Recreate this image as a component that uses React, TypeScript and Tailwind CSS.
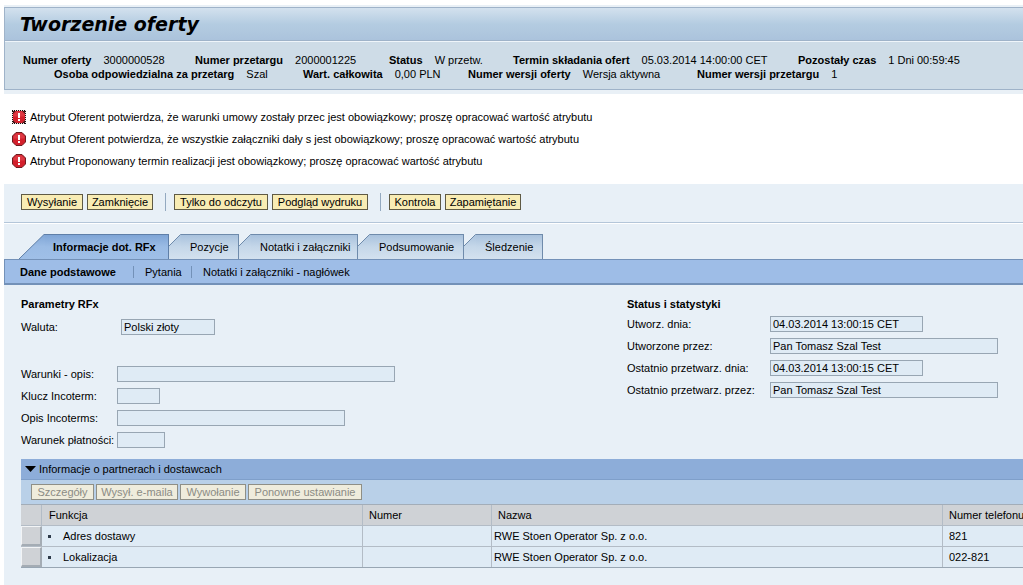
import React from "react";

type Fact = { label: string; value: string };

const factsTop: Fact[] = [
  { label: "Numer oferty", value: "3000000528" },
  { label: "Numer przetargu", value: "2000001225" },
  { label: "Status", value: "W przetw." },
  { label: "Termin składania ofert", value: "05.03.2014 14:00:00 CET" },
  { label: "Pozostały czas", value: "1 Dni 00:59:45" },
];

const factsBottom: Fact[] = [
  { label: "Osoba odpowiedzialna za przetarg", value: "Szal" },
  { label: "Wart. całkowita", value: "0,00 PLN" },
  { label: "Numer wersji oferty", value: "Wersja aktywna" },
  { label: "Numer wersji przetargu", value: "1" },
];

const messages = [
  "Atrybut Oferent potwierdza, że warunki umowy zostały przec jest obowiązkowy; proszę opracować wartość atrybutu",
  "Atrybut Oferent potwierdza, że wszystkie załączniki dały s jest obowiązkowy; proszę opracować wartość atrybutu",
  "Atrybut Proponowany termin realizacji jest obowiązkowy; proszę opracować wartość atrybutu",
];

const tabs = [
  { label: "Pozycje", width: "w-[70px]" },
  { label: "Notatki i załączniki", width: "w-[119px]" },
  { label: "Podsumowanie", width: "w-[106px]" },
  { label: "Śledzenie", width: "w-[79px]" },
];

const partners = [
  { role: "Adres dostawy", number: "", name: "RWE Stoen Operator Sp. z o.o.", phone: "821" },
  { role: "Lokalizacja", number: "", name: "RWE Stoen Operator Sp. z o.o.", phone: "022-821" },
];

function FactItem({ label, value }: Fact) {
  return (
    <div className="flex gap-3 whitespace-nowrap">
      <dt className="font-bold">{label}</dt>
      <dd>{value}</dd>
    </div>
  );
}

function ErrorIcon({ focused }: { focused: boolean }) {
  return (
    <svg className="h-[14px] w-[14px] shrink-0" viewBox="0 0 14 14" aria-hidden="true">
      <path d="M4 .5h6L13.5 4v6L10 13.5H4L.5 10V4z" fill="#d3202c" stroke="#6e1c20" />
      <path d="M4.5 1.5h5l3 3v2h-11v-2z" fill="#e8505a" opacity=".5" />
      <rect x="6" y="3" width="2" height="5" fill="#fff" />
      <rect x="6" y="9" width="2" height="2" fill="#fff" />
      {focused && (
        <>
          <rect x=".5" y=".5" width="13" height="13" fill="none" stroke="#f3dcdc" />
          <path
            d="M0 .5H14M13.5 1V14M0 13.5H14M.5 1V14"
            fill="none"
            stroke="#111"
            strokeDasharray="1 1"
          />
          <path d="M1 1h2v1H2v1H1zM13 1h-2v1h1v1h1zM1 13h2v-1H2v-1H1zM13 13h-2v-1h1v-1h1z" fill="#4a1416" />
        </>
      )}
    </svg>
  );
}

function ActionButton({ children, width }: { children: string; width: string }) {
  return (
    <button
      type="button"
      className={`${width} h-4 whitespace-nowrap border border-[#5f5a44] bg-[#f8ecb4] text-center leading-[14px]`}
    >
      {children}
    </button>
  );
}

function DisabledButton({ children, width }: { children: string; width: string }) {
  return (
    <button
      type="button"
      disabled
      className={`${width} h-4 whitespace-nowrap border border-[#8f8f86] bg-[#efecdc] text-center leading-[14px] text-[#8b8b84]`}
    >
      {children}
    </button>
  );
}

function Separator() {
  return <span className="h-[18px] w-px bg-[#93a9c0]" />;
}

type FieldProps = {
  id: string;
  label: string;
  labelWidth: string;
  width: string;
  value?: string;
};

function Field({ id, label, labelWidth, width, value = "" }: FieldProps) {
  return (
    <div className="flex h-[22px] items-center">
      <label htmlFor={id} className={`${labelWidth} shrink-0 whitespace-nowrap`}>
        {label}
      </label>
      <input
        id={id}
        readOnly
        value={value}
        className={`${width} h-4 border border-[#98a6b3] bg-[#dfebf5] px-[2px] leading-[14px] outline-none`}
      />
    </div>
  );
}

function Tab({ label, width }: { label: string; width: string }) {
  return (
    <button
      type="button"
      role="tab"
      aria-selected={false}
      className={`${width} flex h-[25px] whitespace-nowrap`}
    >
      <svg className="h-[25px] w-3 shrink-0" viewBox="0 0 12 25" aria-hidden="true">
        <defs>
          <linearGradient id="tabFill" gradientUnits="userSpaceOnUse" x1="0" y1="0" x2="0" y2="25">
            <stop offset="0" stopColor="#a9c2dd" />
            <stop offset=".5" stopColor="#c5d7e9" />
            <stop offset="1" stopColor="#d3e1ef" />
          </linearGradient>
        </defs>
        <path d="M0 12 12 0V25H0z" fill="url(#tabFill)" />
        <path d="M0 12 11.5.5H12" fill="none" stroke="#6f8bab" />
      </svg>
      <span className="h-[25px] grow border-r border-t border-[#6f8bab] bg-linear-to-b from-[#a9c2dd] via-[#c5d7e9] to-[#d3e1ef] pl-[9px] text-left leading-[25px]">
        {label}
      </span>
    </button>
  );
}

export default function App() {
  return (
    <div className="min-h-screen overflow-x-hidden bg-white pl-1 pt-[5px] font-['Liberation_Sans',Arial,sans-serif] text-[11px] leading-[14px] text-black">
      <header className="border-b-4 border-t-2 border-[#e9f0f6]">
        <div className="border-y border-l border-[#9fb3c9]">
          <h1 className="h-8 bg-linear-to-b from-[#d3e1ee] via-[#b4cce1] to-[#abc3dc] pl-[15px] font-['DejaVu_Sans',Verdana,sans-serif] text-[19px] font-bold italic leading-8">
            Tworzenie oferty
          </h1>
          <dl className="h-[49px] border-t border-[#9fb3c9] bg-[#cedce7] pl-[18px] pt-[12px] shadow-[inset_0_1px_0_#eff5fa]">
            <div className="grid grid-cols-[172px_194px_124px_285px_auto]">
              {factsTop.map((fact) => (
                <FactItem key={fact.label} {...fact} />
              ))}
            </div>
            <div className="grid grid-cols-[249px_165px_229px_auto] pl-[31px]">
              {factsBottom.map((fact) => (
                <FactItem key={fact.label} {...fact} />
              ))}
            </div>
          </dl>
        </div>
      </header>

      <ul className="py-3 pl-2">
        {messages.map((message, index) => (
          <li key={message} className="flex h-[22px] items-center gap-1">
            <ErrorIcon focused={index === 0} />
            <span>{message}</span>
          </li>
        ))}
      </ul>

      <main className="min-h-[401px] bg-[#e8f0f7]">
        <div className="flex h-10 items-center border-b border-white pb-[3px] pl-[17px] shadow-[inset_0_-1px_0_#b4c6d9]">
          <div className="flex gap-1">
            <ActionButton width="w-[62px]">Wysyłanie</ActionButton>
            <ActionButton width="w-[66px]">Zamknięcie</ActionButton>
          </div>
          <div className="flex items-center gap-2 pl-3">
            <Separator />
            <div className="flex gap-1">
              <ActionButton width="w-[94px]">Tylko do odczytu</ActionButton>
              <ActionButton width="w-[96px]">Podgląd wydruku</ActionButton>
            </div>
          </div>
          <div className="flex items-center gap-2 pl-3">
            <Separator />
            <div className="flex gap-1">
              <ActionButton width="w-[52px]">Kontrola</ActionButton>
              <ActionButton width="w-[76px]">Zapamiętanie</ActionButton>
            </div>
          </div>
        </div>

        <div role="tablist" className="flex pl-[15px] pt-[10px]">
          <button
            type="button"
            role="tab"
            aria-selected={true}
            className="flex h-[25px] w-[150px] whitespace-nowrap font-bold"
          >
            <svg className="h-[25px] w-[26px] shrink-0" viewBox="0 0 26 25" aria-hidden="true">
              <defs>
                <linearGradient id="activeTabFill" x1="0" y1="0" x2="0" y2="1">
                  <stop offset="0" stopColor="#7fa5d6" />
                  <stop offset=".5" stopColor="#9bbce5" />
                  <stop offset="1" stopColor="#9fbfe7" />
                </linearGradient>
              </defs>
              <path d="M0 25 25.5 0H26V25z" fill="url(#activeTabFill)" />
              <path d="M0 25 25 .5H26" fill="none" stroke="#5f7fa8" />
            </svg>
            <span className="h-[25px] grow border-r border-t border-[#5f7fa8] bg-linear-to-b from-[#7fa5d6] via-[#9bbce5] to-[#9fbfe7] pl-2 text-left leading-[25px]">
              Informacje dot. RFx
            </span>
          </button>
          {tabs.map((tab) => (
            <Tab key={tab.label} {...tab} />
          ))}
        </div>

        <nav className="flex h-[26px] items-center border-b-2 border-l border-t border-[#7391b8] bg-[#9ebde7] pl-[15px]">
          <a href="#dane" className="w-[113px] font-bold">
            Dane podstawowe
          </a>
          <span className="h-3 w-px bg-[#7391b8]" />
          <a href="#pytania" className="w-[57px] pl-[11px]">
            Pytania
          </a>
          <span className="h-3 w-px bg-[#7391b8]" />
          <a href="#notatki" className="whitespace-nowrap pl-[11px]">
            Notatki i załączniki - nagłówek
          </a>
        </nav>

        <div className="grid grid-cols-[606px_1fr] pl-[17px] pt-3">
          <section>
            <h2 className="font-bold">Parametry RFx</h2>
            <div className="pb-[25px] pt-[5px]">
              <Field id="waluta" label="Waluta:" labelWidth="w-[100px]" width="w-[94px]" value="Polski złoty" />
            </div>
            <Field id="warunki" label="Warunki - opis:" labelWidth="w-24" width="w-[278px]" />
            <Field id="klucz" label="Klucz Incoterm:" labelWidth="w-24" width="w-[43px]" />
            <Field id="opis" label="Opis Incoterms:" labelWidth="w-24" width="w-[228px]" />
            <Field id="platnosc" label="Warunek płatności:" labelWidth="w-24" width="w-12" />
          </section>
          <section>
            <h2 className="pb-[2px] font-bold">Status i statystyki</h2>
            <Field id="utworz" label="Utworz. dnia:" labelWidth="w-[143px]" width="w-[153px]" value="04.03.2014 13:00:15 CET" />
            <Field id="utworzone" label="Utworzone przez:" labelWidth="w-[143px]" width="w-[228px]" value="Pan Tomasz Szal Test" />
            <Field id="ostatnio-dnia" label="Ostatnio przetwarz. dnia:" labelWidth="w-[143px]" width="w-[153px]" value="04.03.2014 13:00:15 CET" />
            <Field id="ostatnio-przez" label="Ostatnio przetwarz. przez:" labelWidth="w-[143px]" width="w-[228px]" value="Pan Tomasz Szal Test" />
          </section>
        </div>

        <section className="ml-[17px] mt-2">
          <h2 className="flex h-[21px] items-center gap-[3px] border-b border-[#7f9fca] bg-[#8dadd9] pl-1">
            <svg className="h-[6px] w-[11px]" viewBox="0 0 11 6" aria-hidden="true">
              <path d="M0 0H11L5.5 6z" fill="#000" />
            </svg>
            Informacje o partnerach i dostawcach
          </h2>
          <div className="flex h-6 items-center gap-[2px] bg-[#b9d0e8] pl-[10px]">
            <DisabledButton width="w-[63px]">Szczegóły</DisabledButton>
            <DisabledButton width="w-[82px]">Wysył. e-maila</DisabledButton>
            <DisabledButton width="w-[66px]">Wywołanie</DisabledButton>
            <DisabledButton width="w-[114px]">Ponowne ustawianie</DisabledButton>
          </div>
          <table className="w-full table-fixed border-separate border-spacing-0 border-b border-t border-b-[#98a6b3] border-t-[#a3adb8] text-left">
            <colgroup>
              <col className="w-[21px]" />
              <col className="w-[321px]" />
              <col className="w-[129px]" />
              <col className="w-[451px]" />
              <col />
            </colgroup>
            <thead>
              <tr className="h-[21px] bg-[#cfd2d6]">
                <td className="border-b border-r border-[#b3bcc6] p-0" />
                <th scope="col" className="border-b border-r border-[#b3bcc6] py-0 pl-[7px] font-normal">Funkcja</th>
                <th scope="col" className="border-b border-r border-[#b3bcc6] py-0 pl-[6px] font-normal">Numer</th>
                <th scope="col" className="border-b border-r border-[#b3bcc6] py-0 pl-[6px] font-normal">Nazwa</th>
                <th scope="col" className="whitespace-nowrap border-b border-[#b3bcc6] py-0 pl-[6px] font-normal">Numer telefonu</th>
              </tr>
            </thead>
            <tbody>
              {partners.map((partner) => (
                <tr key={partner.role} className="h-[21px] bg-[#dfebf5] last:h-5 [&>td]:border-b last:[&>td]:border-b-0">
                  <td className="border-[#b3bcc6] p-0">
                    <button
                      type="button"
                      aria-label={partner.role}
                      className="block h-5 w-full border-b-2 border-l border-r-2 border-t border-b-[#a4acb4] border-l-[#f2f4f6] border-r-[#a4acb4] border-t-[#f2f4f6] bg-[#cfd2d6]"
                    />
                  </td>
                  <td className="border-r border-[#b3bcc6] py-0 pl-[6px]">
                    <span className="flex items-center gap-3">
                      <span className="h-[3px] w-[3px] bg-[#2d3a4a]" />
                      {partner.role}
                    </span>
                  </td>
                  <td className="border-r border-[#b3bcc6] py-0 pl-[6px]">{partner.number}</td>
                  <td className="border-r border-[#b3bcc6] py-0 pl-[2px]">{partner.name}</td>
                  <td className="border-[#b3bcc6] py-0 pl-[6px]">{partner.phone}</td>
                </tr>
              ))}
            </tbody>
          </table>
        </section>
      </main>
    </div>
  );
}
